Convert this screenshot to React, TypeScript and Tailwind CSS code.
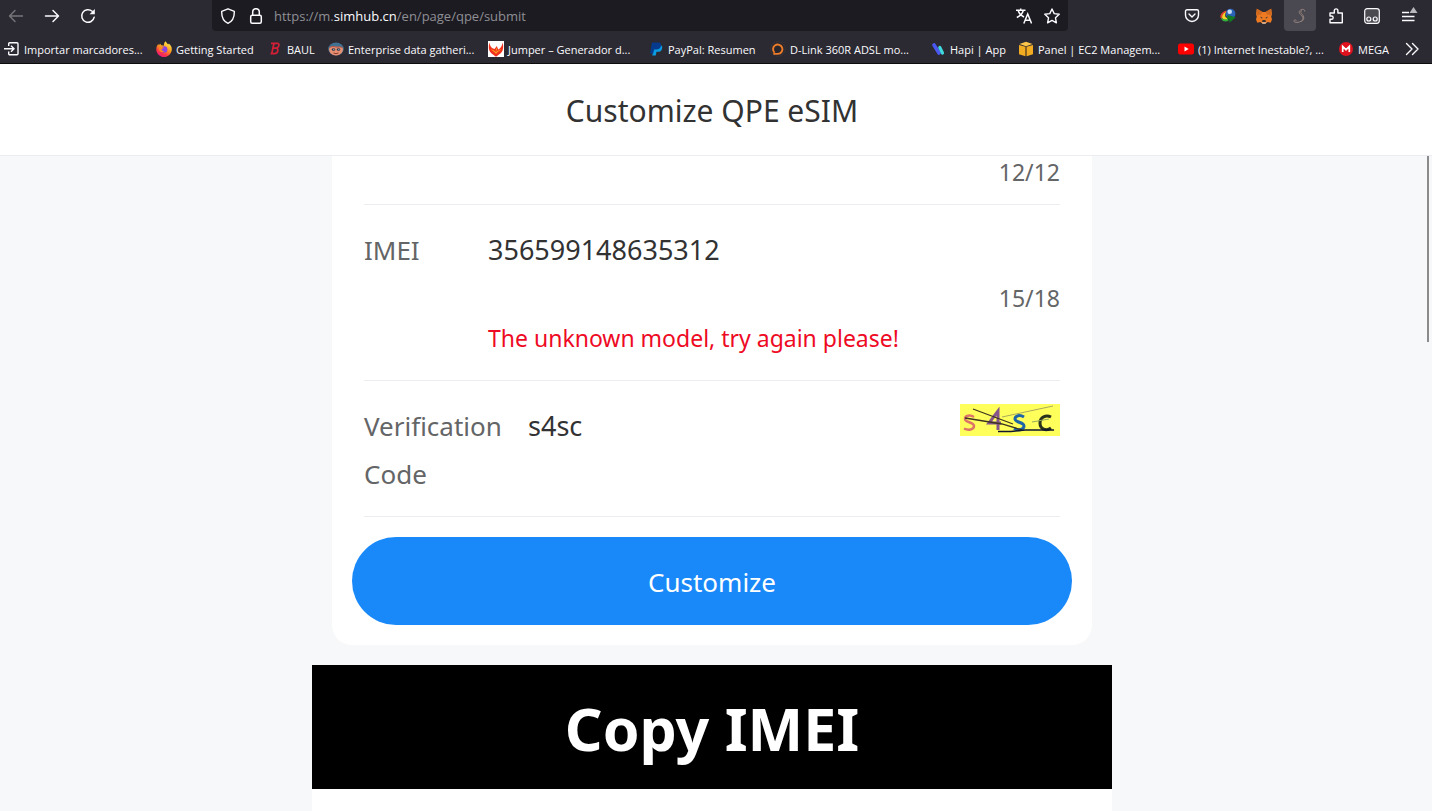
import React from "react";

const BackIcon = () => (
  <svg viewBox="0 0 16 16" className="size-4" fill="none" stroke="currentColor" strokeWidth="1.400" strokeLinecap="round" strokeLinejoin="round">
    <path d="M14.500 8H1.500M7 2.500 1.500 8 7 13.500" />
  </svg>
);

const ForwardIcon = () => (
  <svg viewBox="0 0 16 16" className="size-4" fill="none" stroke="currentColor" strokeWidth="1.500" strokeLinecap="round" strokeLinejoin="round">
    <path d="M1.500 8h13M9 2.500 14.500 8 9 13.500" />
  </svg>
);

const ReloadIcon = () => (
  <svg viewBox="0 0 16 16" className="size-4" fill="none" stroke="currentColor" strokeWidth="1.500" strokeLinecap="round">
    <path d="M14.200 9.200A6.300 6.300 0 1 1 12.200 3.300" />
    <path d="M14.800 1v5.200H9.600z" fill="currentColor" stroke="none" />
  </svg>
);

const ShieldIcon = () => (
  <svg viewBox="0 0 16 16" className="size-4" fill="none" stroke="currentColor" strokeWidth="1.400" strokeLinejoin="round">
    <path d="M8 .8 14.300 3.300C14.500 8.500 12.500 13.200 8 15.300 3.500 13.200 1.500 8.500 1.700 3.300z" />
  </svg>
);

const LockIcon = () => (
  <svg viewBox="0 0 16 16" className="size-4" fill="none" stroke="currentColor" strokeWidth="1.500">
    <rect x="2.700" y="7.200" width="10.600" height="8" rx="1.500" />
    <path d="M4.700 7.200V4a3.300 3.300 0 0 1 6.600 0v3.200" />
  </svg>
);

const StarIcon = () => (
  <svg viewBox="0 0 16 16" className="size-4" fill="none" stroke="currentColor" strokeWidth="1.400" strokeLinejoin="round">
    <path d="m8 1 2.200 4.600 5 .7-3.700 3.500.9 5L8 12.400l-4.400 2.400.9-5L.8 6.300l5-.7z" />
  </svg>
);

const MoreIcon = () => (
  <svg viewBox="0 0 16 16" className="size-4" fill="none" stroke="currentColor" strokeWidth="1.400" strokeLinecap="round" strokeLinejoin="round">
    <path d="M2.500 2.500 8 8l-5.500 5.500M8.500 2.500 14 8l-5.500 5.500" />
  </svg>
);

const HapiIcon = () => (
  <svg viewBox="0 0 16 16" className="size-4">
    <path d="M4 4l5 8" stroke="#4a57f0" strokeWidth="3.600" strokeLinecap="round" />
    <path d="M9.800 6.500l2.700 5.500" stroke="#3fd9dc" strokeWidth="3.200" strokeLinecap="round" />
  </svg>
);

const ImportIcon = () => (
  <svg viewBox="0 0 16 16" className="size-4" fill="none" stroke="#fbfbfe" strokeWidth="1.400">
    <path d="M4.700 5V2.800a1 1 0 0 1 1-1H13a1 1 0 0 1 1 1v10a1 1 0 0 1-1 1H5.700a1 1 0 0 1-1-1V10.500M0 7.800h10M7 4.800l3 3-3 3" />
  </svg>
);

const FirefoxIcon = () => (
  <svg viewBox="0 0 16 16" className="size-4">
    <defs>
      <linearGradient id="fire" x1="0.8" y1="0" x2="0.25" y2="1">
        <stop offset="0" stopColor="#fff44f" />
        <stop offset="0.45" stopColor="#ff9a1f" />
        <stop offset="0.75" stopColor="#ff3647" />
        <stop offset="1" stopColor="#e31587" />
      </linearGradient>
    </defs>
    <path d="M9.500 0.300c1 1 1.200 2 2.500 3 .5.400.7-.2.700-.7C14.800 4 16 6.300 15.800 8.700 15.500 12.800 12 16 8 16S.4 12.700.3 8.700C.2 6 1.200 4.400 2.300 3l.7 1.400L4 2.500l1.300 1.700c1.200-.2 2 .1 2.500.5C8 3 8.200 1.500 9.500.3z" fill="url(#fire)" />
    <circle cx="8.200" cy="8.400" r="3.200" fill="#8a43e6" />
    <path d="M3.500 5.500c2 0 2 .8 4.500 1.200-.7.900-1.800.8-2.500 1.500.2 1.300 1.300 2 2.800 1.900-1.200 1.700-4.500 1.200-5.200-1.600z" fill="#ff8a1c" />
  </svg>
);

const BaulIcon = () => (
  <svg viewBox="0 0 16 16" className="size-4" fill="none" stroke="#d51f35" strokeWidth="1.700">
    <path d="M4 2.300h6.500c2.500.2 1.800 4.500-1.500 4.800H6.300M9 7.100c3.200.4 2 5.600-1.500 5.600H3.500M7 2.300 4.700 12.700" />
  </svg>
);

const ScraperIcon = () => (
  <svg viewBox="0 0 16 16" className="size-4">
    <ellipse cx="8" cy="8" rx="7.800" ry="6.500" fill="#3f7193" />
    <path d="M1 7.500c1-2.500 4-2.500 7-2s6-.5 7 2c.3 4-3 7-7 7s-7.300-3-7-7z" fill="#e58f72" />
    <path d="M1.500 7c1-2 5-1.500 6.500-1s5.500-1 6.500 1" fill="none" stroke="#a84d42" />
    <ellipse cx="5.500" cy="8.500" rx="1.700" ry="1.300" fill="#25334a" />
    <ellipse cx="10.500" cy="8.500" rx="1.700" ry="1.300" fill="#25334a" />
    <circle cx="5.800" cy="8.200" r=".5" fill="#fff" />
    <circle cx="10.800" cy="8.200" r=".5" fill="#fff" />
    <path d="M5.500 12q2.500 1.300 5 0" fill="none" stroke="#8c392f" />
  </svg>
);

const PhoenixIcon = () => (
  <svg viewBox="0 0 16 16" className="size-4">
    <path d="M0 0h16v16H0z" fill="#fff" />
    <path d="M1.300 1.500C.3 6 .6 9.500 3 12l5 3.700 5-3.700c2.400-2.500 2.700-6 1.700-10.500C14 5 12.500 7.500 10.200 8.500L8.800 5 6.500 8C3.500 7.500 2 5 1.300 1.500z" fill="#f0301c" />
    <path d="M3 7.500C4 10.500 6 10 8 13c2-3 4-2.500 5-5.500-1 2-3.500 1.500-5 3.500-1.500-2-4-1.500-5-3.500zM8.200 6.500l1 2.500-1.500 1z" fill="#ff9d24" />
  </svg>
);

const PaypalIcon = () => (
  <svg viewBox="0 0 16 16" className="size-4">
    <path d="M6 4h6c2.200.3 2.600 2 2 3.900-.6 2-2 2.900-4 2.900H8.500L7.700 14.500H4.300z" fill="#0a9be0" />
    <path d="M4 1.500h6c2.700.1 3.500 1.600 2.900 3.800C12.200 7.500 10.500 8.600 8.200 8.600H6.100L5.200 12.500H2z" fill="#053a8c" />
  </svg>
);

const DLinkIcon = () => (
  <svg viewBox="0 0 16 16" className="size-4">
    <circle cx="8" cy="8" r="7.300" fill="#2b262b" stroke="#3a3539" />
    <path d="M4.600 11.700A4.700 4.700 0 1 1 8 12.900H3.300" fill="none" stroke="#ed7d2b" strokeWidth="1.900" />
  </svg>
);

const AwsIcon = () => (
  <svg viewBox="0 0 16 16" className="size-4">
    <path d="M1.500 3 8 .8 14.500 3 8 5.200z" fill="#fbc54a" />
    <path d="M1 4l6.400 1.800V15.300L1 13.200zM15 4 8.600 5.800v9.500L15 13.200z" fill="#f2ac22" />
    <path d="M8 5.500V15" stroke="#9a681a" />
  </svg>
);

const YoutubeIcon = () => (
  <svg viewBox="0 0 16 16" className="size-4">
    <rect y="2.500" width="16" height="11" rx="2.500" fill="#f00" />
    <path d="M6.500 5.500v5l4.200-2.500z" fill="#fff" />
  </svg>
);

const MegaIcon = () => (
  <svg viewBox="0 0 16 16" className="size-4">
    <circle cx="8" cy="8" r="7" fill="#e0121d" />
    <path d="M4.700 11V5.500L8 8.700l3.300-3.200V11" fill="none" stroke="#fff" strokeWidth="1.700" />
  </svg>
);

const TranslateIcon = () => (
  <svg viewBox="0 0 16 16" className="size-4" fill="none" stroke="#fbfbfe" strokeWidth="1.500">
    <path d="M0 2.300h9.500M4.700.5v1.800M2.200 2.500C3 5.500 5 7.500 8 9M7.300 2.500C6.500 5.500 4 8 .8 9.500" />
    <path d="M7.800 15.500 11.700 6l3.900 9.500M9.200 12.300h5" />
  </svg>
);

const PocketIcon = () => (
  <svg viewBox="0 0 16 16" className="size-4" fill="none" stroke="#fbfbfe" strokeWidth="1.400" strokeLinecap="round" strokeLinejoin="round">
    <path d="M3 1.700h10a1.500 1.500 0 0 1 1.500 1.500V7a6.500 6.500 0 0 1-13 0V3.200A1.500 1.500 0 0 1 3 1.700zM5 6l3 2.900L11 6" />
  </svg>
);

const DownloadManagerIcon = () => (
  <svg viewBox="0 0 16 16" className="size-4">
    <circle cx="10.500" cy="5.700" r="4.900" fill="#2a62b8" />
    <circle cx="9.700" cy="3.700" r="2.300" fill="#c4dcf2" />
    <path d="M6.500 2.500C2 3.500-.3 7 .6 10l2 .5C2.500 7.500 4 5.500 6 4.500z" fill="#e4452a" />
    <path d="M6 4C3.500 5 1.800 7.500 2.200 10c1 2 3.500 2.500 6 2L7.500 9.800C5 10 4.500 7 6 4z" fill="#f0d52a" />
    <path d="M.8 9.500C1.500 13 4.500 14.300 8.500 13L8 10.700C5.500 11.700 2.500 11.500.8 9.500z" fill="#35ae3a" />
    <path d="M7.500 7 15.800 9.200 9.500 14.800V12L7 10.500z" fill="#117a22" />
  </svg>
);

const FoxIcon = () => (
  <svg viewBox="0 0 16 16" className="size-4">
    <path d="M.8.8 6.500 4h3L15.200.8 16 6l-.8 2.500.8 3-1.300 3.300-3-.8L9.500 15.500h-3L4.300 14l-3 .8L0 11.500l.8-3L0 6z" fill="#ee7b22" />
    <path d="M.8.8 6.500 4 5 6.500.5 7.500zM15.200.8 9.500 4 11 6.500l4.500 1z" fill="#cf6a20" />
    <path d="M3.800 8.500 6.500 9.700l-.6 1zM12.200 8.500 9.500 9.700l.6 1z" fill="#2b303b" />
    <path d="M5 13l1 1.500h4l1-1.500-1.500 2.700h-3z" fill="#d8c6b8" />
    <path d="m6.200 12.800.5-.8h2.600l.5.800v1.300H6.200z" fill="#38312f" />
  </svg>
);

const ScriptIcon = () => (
  <svg viewBox="0 0 16 16" className="size-4" fill="none" stroke="#94837d" strokeWidth="1">
    <path d="M12.800 3.500c.2-2-1.800-2.700-3.600-1.800C6.500 3 6.800 5 8.500 6.500c2.500 2 3.300 4.500 1 6.500-2.300 1.800-7 2-7.700.2-.3-1.200 2-1.500 2.700-.6M9.500 2.200C8.500 3.800 8.700 5 10 6.200c2.500 2.300 2.500 5.300-.8 7.600" />
  </svg>
);

const PuzzleIcon = () => (
  <svg viewBox="0 0 16 16" className="size-4" fill="none" stroke="#fbfbfe" strokeWidth="1.400" strokeLinejoin="round">
    <path d="M2 8V5h4.300V2.700a1.800 1.800 0 0 1 3.600 0V5h4.400v9.700H2v-3.400h1.500a1.600 1.600 0 0 0 0-3.300z" />
  </svg>
);

const MonkeyIcon = () => (
  <svg viewBox="0 0 16 16" className="size-4" fill="none" stroke="#fbfbfe" strokeWidth="1.200">
    <rect x=".7" y=".7" width="14.600" height="14.600" rx="2.500" fill="#4b4a51" />
    <circle cx="4.800" cy="11" r="2" />
    <circle cx="11.200" cy="11" r="2" />
  </svg>
);

const MenuIcon = () => (
  <svg viewBox="0 0 18 18" className="size-[18px]" fill="none" stroke="#fbfbfe" strokeWidth="1.300">
    <path d="M2 5.500h7M2 9.500h12.500M2 13.500h12.500" />
    <path d="m13.500 0 4 6h-8z" fill="#b9b9bd" stroke="none" />
  </svg>
);

const bookmarks = [
  { label: "Importar marcadores...", icon: <ImportIcon />, width: "w-[152px]" },
  { label: "Getting Started", icon: <FirefoxIcon />, width: "w-[111px]" },
  { label: "BAUL", icon: <BaulIcon />, width: "w-[61px]" },
  { label: "Enterprise data gatheri...", icon: <ScraperIcon />, width: "w-[160px]" },
  { label: "Jumper – Generador d...", icon: <PhoenixIcon />, width: "w-[160px]" },
  { label: "PayPal: Resumen", icon: <PaypalIcon />, width: "w-[122px]" },
  { label: "D-Link 360R ADSL mo...", icon: <DLinkIcon />, width: "w-[160px]" },
  { label: "Hapi | App", icon: <HapiIcon />, width: "w-[88px]" },
  { label: "Panel | EC2 Managem...", icon: <AwsIcon />, width: "w-[160px]" },
  { label: "(1) Internet Inestable?, ...", icon: <YoutubeIcon />, width: "w-[160px]" },
  { label: "MEGA", icon: <MegaIcon />, width: "w-[60px]" },
];

function BrowserChrome() {
  return (
    <div className="shrink-0 border-b border-[#0c0c0d] bg-[#2b2a33] font-['Open_Sans',sans-serif] text-[#fbfbfe]">
      <div className="flex h-[31px] items-center">
        <nav className="flex w-[212px] shrink-0 items-center gap-5 pl-2" aria-label="History">
          <button aria-label="Back" className="text-[#77767c]"><BackIcon /></button>
          <button aria-label="Forward"><ForwardIcon /></button>
          <button aria-label="Reload"><ReloadIcon /></button>
        </nav>
        <div className="flex h-[31px] min-w-0 flex-1 items-center rounded-b bg-[#1c1b22] px-2">
          <button aria-label="Tracking protection"><ShieldIcon /></button>
          <button aria-label="Site information" className="ml-3"><LockIcon /></button>
          <div className="ml-2.5 flex-1 truncate text-[13px] leading-5 text-[#8f8f94]">
            https://m.<span className="text-[#fbfbfe]">simhub.cn</span>/en/page/qpe/submit
          </div>
          <button aria-label="Translate"><TranslateIcon /></button>
          <button aria-label="Bookmark this page" className="ml-3"><StarIcon /></button>
        </div>
        <div className="flex h-[31px] w-[364px] shrink-0 items-center justify-end pr-3.5">
          <button aria-label="Pocket" className="mr-5"><PocketIcon /></button>
          <button aria-label="Download manager" className="mr-5"><DownloadManagerIcon /></button>
          <button aria-label="Wallet" className="mr-3"><FoxIcon /></button>
          <button aria-label="Script" className="mr-3 flex h-[31px] w-8 items-center justify-center rounded-b bg-[#4a4951]"><ScriptIcon /></button>
          <button aria-label="Extensions" className="mr-5"><PuzzleIcon /></button>
          <button aria-label="User scripts" className="mr-5"><MonkeyIcon /></button>
          <button aria-label="Menu"><MenuIcon /></button>
        </div>
      </div>
      <div className="flex h-8 items-center pt-1 pl-1">
        {bookmarks.map((b) => (
          <a key={b.label} href="#" className={`flex shrink-0 items-center gap-1 text-[11px] leading-4 whitespace-nowrap ${b.width}`}>
            <span className="shrink-0">{b.icon}</span>
            <span className="pt-0.5">{b.label}</span>
          </a>
        ))}
        <button aria-label="More bookmarks" className="mr-3 ml-auto"><MoreIcon /></button>
      </div>
    </div>
  );
}

function Captcha() {
  return (
    <svg viewBox="0 0 100 32" className="h-8 w-[100px]" fill="none" role="img" aria-label="Captcha">
      <path d="M0 0h100v32H0z" fill="#ffff5c" />
      <path d="M14 13C10 10.500 5 11.500 5 15s9 3 9 7-6 4.500-10 2.500" stroke="#dc7468" strokeWidth="2.500" />
      <path d="M38 26V7L29 19h12" stroke="#85558c" strokeWidth="3" />
      <path d="M64 13c-4-2.500-9-1.500-9 2s9 3 9 7-6 4.500-10 2.500" stroke="#1d65a6" strokeWidth="3" />
      <path d="M91 13c-5-2.500-11 0-11 6s6 8.500 11 5" stroke="#29321c" strokeWidth="3" />
      <path d="M42 13 93 2" stroke="#a9a95c" />
      <path d="M72 18l17-3" stroke="#93a85c" />
      <path d="M13 5l40 15M5 14l37 6 20 6" stroke="#3c3420" strokeWidth="1.300" />
      <path d="M38 27.500h13l14-1.500h29" stroke="#11152e" strokeWidth="1.500" />
    </svg>
  );
}

export default function App() {
  return (
    <div className="flex h-screen flex-col overflow-hidden bg-[#f7f8fa] font-['Noto_Sans',sans-serif] text-[#323233]">
      <BrowserChrome />
      <header className="flex h-[92px] shrink-0 items-center justify-center border-b border-[#ebedf0] bg-white pt-0.5 pr-2">
        <h1 className="text-[30px] leading-[42px]">Customize QPE eSIM</h1>
      </header>
      <main className="relative min-h-0 flex-1 overflow-hidden pr-2">
        <div className="mx-auto max-w-[800px]">
          <form className="mx-5 rounded-b-[20px] bg-white pb-5" onSubmit={(e) => e.preventDefault()}>
            <div className="mx-8 text-[26px] leading-[48px]">
              <div className="border-b border-[#ebedf0] pb-4 text-right text-[23px] leading-8 text-[#646566]">12/12</div>
              <div className="flex border-b border-[#ebedf0] pt-[21px] pb-[26px]">
                <label htmlFor="imei" className="w-[124px] shrink-0 text-[#646566]">IMEI</label>
                <div className="min-w-0 flex-1">
                  <input id="imei" className="block h-12 w-full bg-transparent text-[27px] outline-none" defaultValue="356599148635312" />
                  <div className="text-right text-[23px] leading-[48px] text-[#646566]">15/18</div>
                  <div className="text-[23px] leading-8 text-[#ee0a24]">The unknown model, try again please!</div>
                </div>
              </div>
              <div className="flex items-start border-b border-[#ebedf0] pt-[21px] pb-[18px]">
                <label htmlFor="code" className="w-[164px] shrink-0 text-[#646566]">Verification<br />Code</label>
                <input id="code" className="h-12 min-w-0 flex-1 bg-transparent text-[27px] outline-none" defaultValue="s4sc" />
                <button type="button" aria-label="Refresh code" className="mt-0.5"><Captcha /></button>
              </div>
            </div>
            <div className="mx-5 pt-5">
              <button type="submit" className="h-[88px] w-full rounded-full bg-[#1989fa] pt-0.5 text-[26px] text-white">Customize</button>
            </div>
          </form>
          <section className="mt-5 bg-white pb-12">
            <h2 className="bg-black pt-0.5 text-center text-[59px] leading-[122px] font-bold text-white">Copy IMEI</h2>
          </section>
        </div>
        <div className="absolute top-0 right-[3px] h-[186px] w-0.5 bg-[#8b8b8c]" />
      </main>
    </div>
  );
}
